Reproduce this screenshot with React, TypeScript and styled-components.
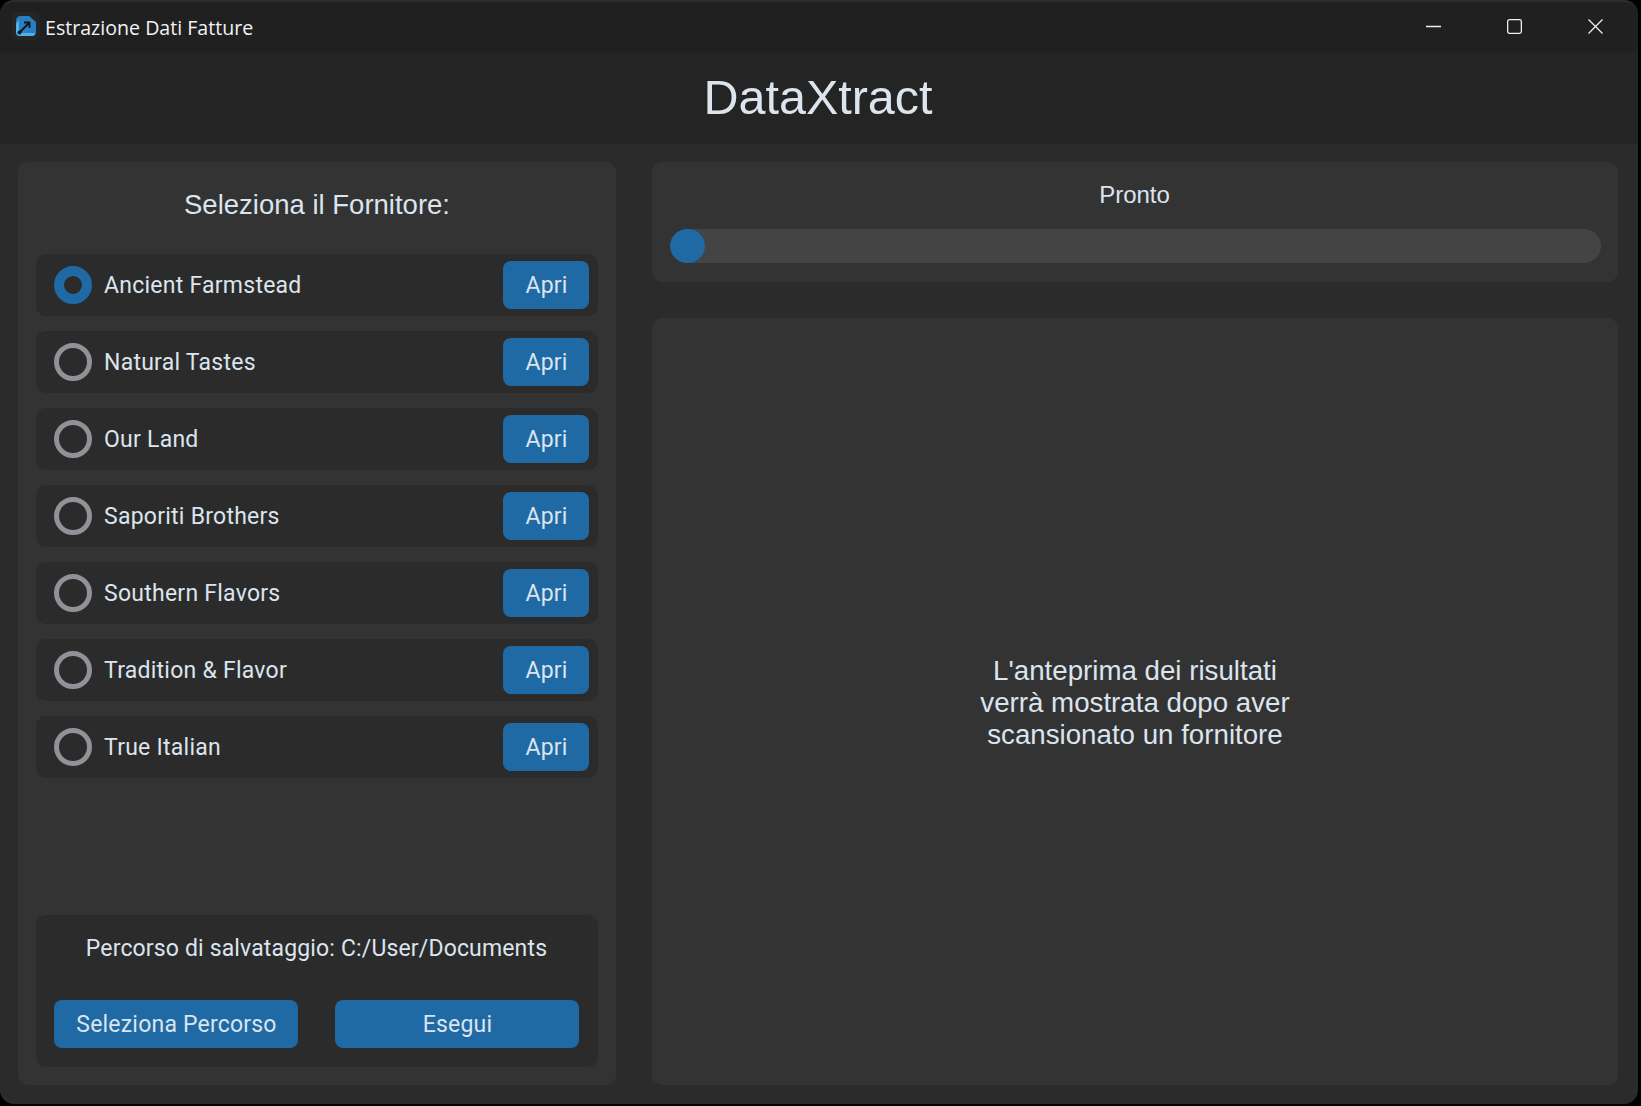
import styled, { createGlobalStyle } from 'styled-components';

const blue = '#1f6aa5';
const textColor = '#dce4ee';

const GlobalStyle = createGlobalStyle`
  html, body {
    margin: 0;
    background: #000;
  }
  * {
    box-sizing: border-box;
  }
`;

const Page = styled.div`
  width: 1641px;
  height: 1106px;
  background: #000;
  overflow: hidden;
`;

const Window = styled.div`
  width: 1638px;
  height: 1104px;
  display: flex;
  flex-direction: column;
  background: #2b2b2b;
  border-radius: 14px;
  border-top: 2px solid #2e2e2e;
  overflow: hidden;
`;

const TitleBar = styled.div`
  height: 50px;
  flex: none;
  display: flex;
  align-items: center;
  background: #202020;
  padding-left: 12px;
`;

const AppIcon = styled.svg`
  width: 28px;
  height: 28px;
  flex: none;
  margin-top: -2px;
`;

const WindowTitle = styled.div`
  margin-left: 5px;
  flex: 1;
  font-family: 'Open Sans', sans-serif;
  font-size: 19.6px;
  color: #f2f2f2;
`;

const Controls = styled.div`
  display: flex;
  align-items: center;
  gap: 66px;
  padding-right: 35px;
  margin-top: -2px;
`;

const ControlIcon = styled.svg`
  display: block;
  width: 15px;
  height: 15px;
  fill: none;
  stroke: #eeeeee;
  stroke-width: 1.3;
`;

const Header = styled.h1`
  margin: 0;
  height: 92px;
  flex: none;
  display: flex;
  align-items: center;
  justify-content: center;
  background: #242424;
  color: ${textColor};
  font-family: 'Liberation Sans', Arial, sans-serif;
  font-weight: 400;
  font-size: 48.5px;
  padding: 0 2px 2px 0;
`;

const Main = styled.main`
  flex: 1;
  min-height: 0;
  display: flex;
  gap: 36px;
  padding: 18px 20px 19px 18px;
`;

const LeftPanel = styled.section`
  width: 598px;
  flex: none;
  display: flex;
  flex-direction: column;
  background: #333333;
  border-radius: 10px;
  padding: 0 18px 18px;
`;

const PanelHeading = styled.h2`
  margin: 0 0 8px;
  height: 84px;
  padding-top: 2px;
  display: flex;
  align-items: center;
  justify-content: center;
  color: ${textColor};
  font-family: 'Liberation Sans', Arial, sans-serif;
  font-weight: 400;
  font-size: 27.5px;
`;

const SupplierList = styled.div`
  flex: 1;
  display: flex;
  flex-direction: column;
  gap: 15px;
`;

const SupplierRow = styled.div`
  height: 62px;
  display: flex;
  align-items: center;
  background: #2b2b2b;
  border-radius: 10px;
  padding: 0 9px 0 18px;
`;

const Radio = styled.span<{ $checked?: boolean }>`
  width: 38px;
  height: 38px;
  flex: none;
  border-radius: 50%;
  border: ${(p) => (p.$checked ? `10px solid ${blue}` : '5px solid #8f9296')};
`;

const SupplierName = styled.span`
  flex: 1;
  margin-left: 12px;
  padding-top: 1px;
  color: ${textColor};
  font-family: Roboto, sans-serif;
  font-size: 23px;
  letter-spacing: 0.25px;
`;

const Button = styled.button<{ $wide?: boolean }>`
  width: ${(p) => (p.$wide ? '244px' : '86px')};
  height: 48px;
  flex: none;
  border: 0;
  border-radius: 8px;
  background: ${blue};
  color: ${textColor};
  font-family: Roboto, sans-serif;
  font-size: 23px;
  letter-spacing: 0.2px;
  padding: 1px 0 0 1px;
`;

const SavePanel = styled.div`
  height: 152px;
  flex: none;
  display: flex;
  flex-direction: column;
  justify-content: space-between;
  background: #2b2b2b;
  border-radius: 10px;
  padding: 0 19px 19px 18px;
`;

const SavePath = styled.div`
  height: 66px;
  display: flex;
  align-items: center;
  justify-content: center;
  color: ${textColor};
  font-family: Roboto, sans-serif;
  font-size: 23px;
  letter-spacing: 0.15px;
`;

const SaveActions = styled.div`
  display: flex;
  justify-content: space-between;
`;

const RightColumn = styled.section`
  flex: 1;
  min-width: 0;
  display: flex;
  flex-direction: column;
  gap: 36px;
`;

const StatusPanel = styled.div`
  height: 120px;
  flex: none;
  background: #333333;
  border-radius: 10px;
  padding: 0 17px 0 18px;
`;

const StatusText = styled.div`
  height: 67px;
  padding: 0 2px 2px 0;
  display: flex;
  align-items: center;
  justify-content: center;
  color: ${textColor};
  font-family: 'Liberation Sans', Arial, sans-serif;
  font-size: 24px;
`;

const ProgressTrack = styled.div`
  height: 34px;
  background: #444444;
  border-radius: 17px;
  overflow: hidden;
`;

const ProgressFill = styled.div`
  width: 35px;
  height: 100%;
  background: ${blue};
  border-radius: 17px;
`;

const PreviewPanel = styled.div`
  flex: 1;
  display: flex;
  align-items: center;
  justify-content: center;
  background: #333333;
  border-radius: 10px;
  padding-top: 2px;
  color: ${textColor};
  font-family: 'Liberation Sans', Arial, sans-serif;
  font-size: 27.7px;
  line-height: 32px;
  text-align: center;
`;

const suppliers = [
  'Ancient Farmstead',
  'Natural Tastes',
  'Our Land',
  'Saporiti Brothers',
  'Southern Flavors',
  'Tradition & Flavor',
  'True Italian',
];

export default function App() {
  return (
    <Page>
      <GlobalStyle />
      <Window>
        <TitleBar>
          <AppIcon viewBox="0 0 28 28">
            <rect width="28" height="28" rx="5" fill="#232527" />
            <path d="M9 4 H17 L24 10 V20 Q24 24 20 24 H8 Q4 24 4 20 V9 Q4 4 9 4 Z" fill="#2b7fc0" />
            <path d="M4 12 L7 8 V21 H23 Q23 24 20 24 H8 Q4 24 4 20 Z" fill="#4fb0ea" />
            <path d="M8 20 L17 11 M12 10.5 H17.5 V16" fill="none" stroke="#101418" strokeWidth="1.8" />
            <circle cx="7.5" cy="20.5" r="2" fill="#101418" />
          </AppIcon>
          <WindowTitle>Estrazione Dati Fatture</WindowTitle>
          <Controls>
            <ControlIcon viewBox="0 0 15 15">
              <path d="M0 7.5 H15" />
            </ControlIcon>
            <ControlIcon viewBox="0 0 15 15">
              <rect x="0.65" y="0.65" width="13.7" height="13.7" rx="1.8" />
            </ControlIcon>
            <ControlIcon viewBox="0 0 15 15">
              <path d="M0.5 0.5 L14.5 14.5 M14.5 0.5 L0.5 14.5" />
            </ControlIcon>
          </Controls>
        </TitleBar>
        <Header>DataXtract</Header>
        <Main>
          <LeftPanel>
            <PanelHeading>Seleziona il Fornitore:</PanelHeading>
            <SupplierList>
              {suppliers.map((name, i) => (
                <SupplierRow key={name}>
                  <Radio $checked={i === 0} />
                  <SupplierName>{name}</SupplierName>
                  <Button>Apri</Button>
                </SupplierRow>
              ))}
            </SupplierList>
            <SavePanel>
              <SavePath>Percorso di salvataggio: C:/User/Documents</SavePath>
              <SaveActions>
                <Button $wide>Seleziona Percorso</Button>
                <Button $wide>Esegui</Button>
              </SaveActions>
            </SavePanel>
          </LeftPanel>
          <RightColumn>
            <StatusPanel>
              <StatusText>Pronto</StatusText>
              <ProgressTrack>
                <ProgressFill />
              </ProgressTrack>
            </StatusPanel>
            <PreviewPanel>
              L'anteprima dei risultati
              <br />
              verrà mostrata dopo aver
              <br />
              scansionato un fornitore
            </PreviewPanel>
          </RightColumn>
        </Main>
      </Window>
    </Page>
  );
}
